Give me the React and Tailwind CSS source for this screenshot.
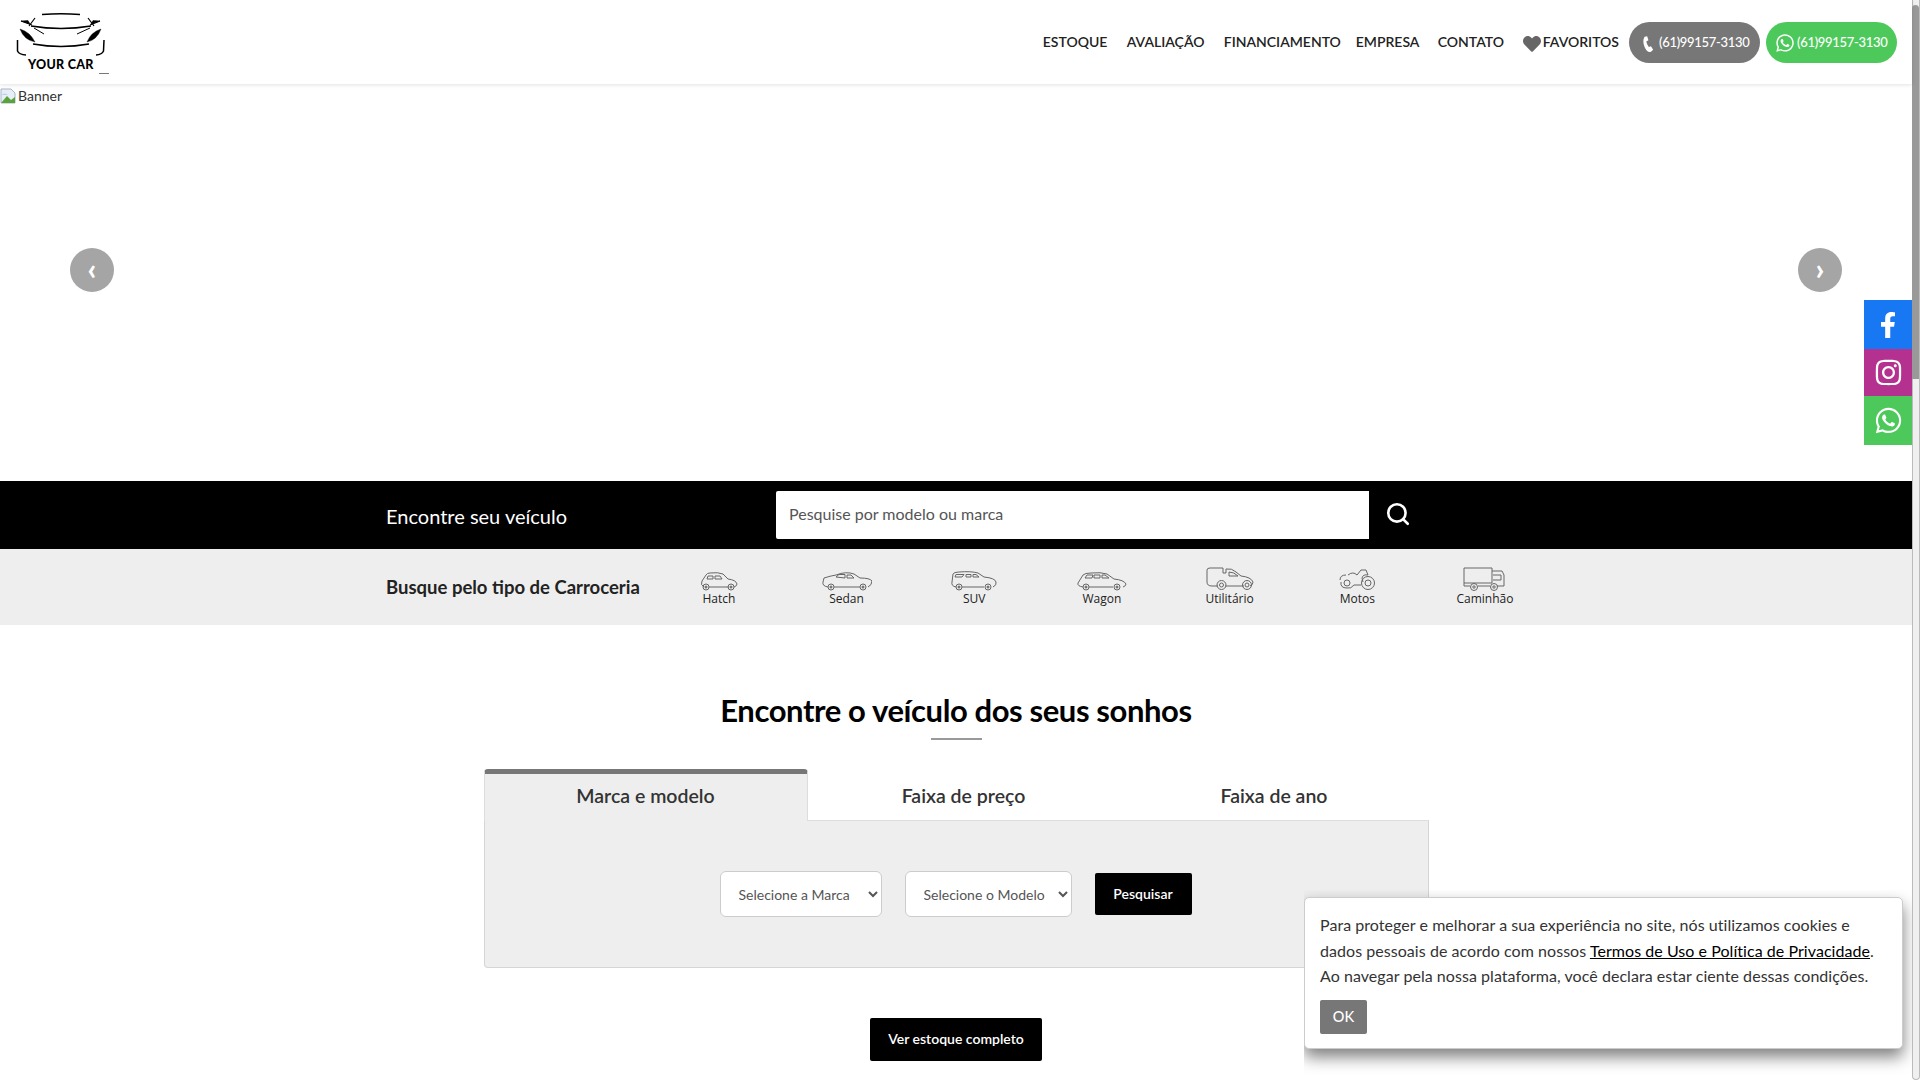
import { useState } from "react";
import { FaFacebookF, FaInstagram, FaWhatsapp, FaHeart } from "react-icons/fa";
import { Search } from "lucide-react";

const font = "font-['Lato','Noto_Sans',sans-serif]";

const navLinks = [
  { name: "ESTOQUE", w: "w-[64px]" },
  { name: "AVALIAÇÃO", w: "w-[77px]" },
  { name: "FINANCIAMENTO", w: "w-[112px]" },
  { name: "EMPRESA", w: "w-[62px]" },
  { name: "CONTATO", w: "w-[64px]" },
];

function Logo() {
  return (
    <div className="ml-[15px] flex w-[95px] flex-col items-center">
      <svg width="95" height="46" viewBox="15 10 95 46" fill="none" stroke="#000">
        <path d="M42 12.5 Q61 11 80 12.5" strokeWidth="1.4" />
        <path d="M21 19 L32 23 M35 16 L29 24 M88 16 L94 24 M100 19 L90 23" strokeWidth="1.2" />
        <path d="M21 19 L28 18.5 L30 22 Z M100 19 L93 18.5 L91 22 Z" fill="#000" strokeWidth="0.5" />
        <path d="M31 24 Q61 29 91 24" strokeWidth="1.5" />
        <path d="M34 26 L44 32 M90 26 L77 32" strokeWidth="1" />
        <path d="M20 27 Q30 30 35 40 Q24 38 20 27 Z M101 27 Q91 30 87 40 Q97 38 101 27 Z" fill="#000" strokeWidth="0.4" />
        <path d="M33 42 Q61 47 89 42" strokeWidth="1.3" />
        <path d="M17.5 38 L17.5 49 Q19 52.5 26 53 M104 38 L103.5 49 Q102 52.5 96 53" strokeWidth="1.5" />
      </svg>
      <div className="relative w-full pl-[13px] text-[12.5px] leading-[14px] font-black tracking-[0.3px] text-black">
        YOUR CAR
        <span className="absolute right-[1px] bottom-[-2px] h-[1.5px] w-[10px] bg-[#777]" />
      </div>
    </div>
  );
}

function PhoneGlyph() {
  return (
    <svg width="12" height="19" viewBox="0 0 14 20" fill="#fff" className="mt-[3px] shrink-0">
      <path d="M3 1 L6 0.5 L7.5 5 L5 6.5 Q5.5 10 8 13 L10.5 12 L13 16 L10.5 18.5 Q6 20 3 13 Q0 6 3 1 Z" />
    </svg>
  );
}

function Header() {
  return (
    <header className="relative z-10 flex h-[84px] items-center justify-between bg-white shadow-[0_1px_4px_rgba(0,0,0,0.12)]">
      <Logo />
      <nav className="mr-[15px] flex items-center text-[14px] font-semibold text-[#222]">
        {navLinks.map((link) => (
          <a key={link.name} className={`mr-[20px] whitespace-nowrap pb-[2px] ${link.w}`}>
            {link.name}
          </a>
        ))}
        <a className="mr-[10px] flex items-center whitespace-nowrap pb-[2px]">
          <FaHeart className="mt-[5px] mr-[2px] ml-[1px] text-[#666]" size={18} />
          FAVORITOS
        </a>
        <a className="flex h-[41px] w-[131px] items-center gap-[5px] rounded-[21px] bg-[#777] pt-[2px] pl-[13px] text-[13px] font-medium tracking-[-0.3px] text-white">
          <PhoneGlyph />
          (61)99157-3130
        </a>
        <a className="ml-[6px] flex h-[41px] w-[131px] items-center gap-[2px] rounded-[21px] bg-[#4dc95b] pt-[2px] pl-[9px] text-[13px] font-medium tracking-[-0.3px] text-white">
          <FaWhatsapp size={20} />
          (61)99157-3130
        </a>
      </nav>
    </header>
  );
}

function Banner() {
  return (
    <section className="relative h-[397px] bg-white">
      <div className="flex items-center pt-[2px] text-[14px] leading-[20px] text-[#333]">
        <svg width="16" height="16" viewBox="0 0 16 16" className="mr-[2px] shrink-0">
          <path d="M1 1 H11 L15 5 V15 H1 Z" fill="#e8eef8" stroke="#a9b4c4" />
          <path d="M1 15 L7 8 L11 12 L15 9 V15 Z" fill="#5aa33c" />
          <path d="M1 7 Q5 4 8 7" fill="#bcd0ef" />
        </svg>
        Banner
      </div>
      <button className="absolute top-[164px] left-[70px] flex h-[44px] w-[44px] items-center justify-center rounded-full bg-[#a5a5a5] pb-[4px] text-[30px] font-black text-white">
        ‹
      </button>
      <button className="absolute top-[164px] left-[1798px] flex h-[44px] w-[44px] items-center justify-center rounded-full bg-[#a5a5a5] pb-[4px] text-[30px] font-black text-white">
        ›
      </button>
    </section>
  );
}

function SearchBar() {
  return (
    <section className="flex h-[68px] items-center bg-black pl-[386px]">
      <h2 className="mt-[2px] w-[390px] text-[20px] font-normal text-white">Encontre seu veículo</h2>
      <input
        placeholder="Pesquise por modelo ou marca"
        className="mb-[1px] h-[48px] w-[593px] rounded-l-[2px] bg-white px-[13px] pb-[2px] text-[16px] text-[#444] placeholder:text-[#555] outline-none"
      />
      <Search className="mt-[-2px] ml-[16px] text-white" size={26} strokeWidth={2.4} />
    </section>
  );
}

const iconProps = { fill: "none", stroke: "#666", strokeWidth: 1 };

function Wheel({ cx, cy, r = 3 }) {
  return (
    <g>
      <circle cx={cx} cy={cy} r={r} fill="none" stroke="#666" strokeWidth="1" />
      <circle cx={cx} cy={cy} r={r - 1.5} fill="#777" stroke="none" />
    </g>
  );
}

function HatchIcon() {
  return (
    <svg width="38" height="20" viewBox="0 0 38 20" {...iconProps}>
      <path d="M4 16 Q0 14 2 10 L6 4 Q7 2 10 2 Q18 1 23 3 L28 8 Q36 9 37 13 Q37 15 34 16 M9 16 H29" />
      <path d="M8 5 L7 8 H13 L13 5 Z M15 5 V8 H22 L20 5 Z" />
      <Wheel cx="6" cy="16" />
      <Wheel cx="31" cy="16" />
    </svg>
  );
}

function SedanIcon() {
  return (
    <svg width="50" height="20" viewBox="0 0 50 20" {...iconProps}>
      <path d="M6 16 Q0 15 1 11 L2 7 Q8 5 14 4 Q24 0 32 3 L38 7 Q48 7 50 10 Q50 14 46 16 M12 16 H38" />
      <path d="M14 6 L17 3.5 H23 V7 Z M25 4 H29 L32 7 H25 Z" />
      <Wheel cx="9" cy="16" />
      <Wheel cx="41" cy="16" />
    </svg>
  );
}

function SuvIcon() {
  return (
    <svg width="46" height="20" viewBox="0 0 46 20" {...iconProps}>
      <path d="M5 16 Q0 15 1 11 L2 3 Q3 1 8 1 Q20 0 27 2 L33 6 Q44 7 45 11 Q46 14 42 16 M11 16 H33" />
      <path d="M5 3.5 L4 6 H11 L13 3.5 Z M15 3.5 V6 H20 V3.5 Z M22 3.5 V6 H28 L25 3.5 Z" />
      <Wheel cx="8" cy="16" />
      <Wheel cx="37" cy="16" />
    </svg>
  );
}

function WagonIcon() {
  return (
    <svg width="50" height="20" viewBox="0 0 50 20" {...iconProps}>
      <path d="M6 16 Q0 15 1 12 L6 4 Q8 2 14 2 Q24 1 30 3 L37 8 Q47 9 49 13 Q49 15 46 16 M12 16 H36" />
      <path d="M8 7 L10 4 H16 L15 7 Z M17 4 H23 V7 H17 Z M25 4 H28 L32 7 H25 Z" />
      <Wheel cx="9" cy="16" />
      <Wheel cx="40" cy="16" />
    </svg>
  );
}

function UtilitarioIcon() {
  return (
    <svg width="48" height="24" viewBox="0 0 48 24" {...iconProps}>
      <path d="M12 19 H6 Q1 19 1 15 V3 Q1 1 4 1 H17 V6 H20 V2 Q26 1 30 5 L35 9 Q45 10 47 15 Q47 18 44 19 M19 19 H38" />
      <path d="M23 9 V5 Q28 5 32 9 Z" />
      <circle cx="15.5" cy="18" r="4.5" />
      <circle cx="15.5" cy="18" r="2" />
      <circle cx="41" cy="18" r="4.5" />
      <circle cx="41" cy="18" r="2" />
    </svg>
  );
}

function MotoIcon() {
  return (
    <svg width="36" height="24" viewBox="0 0 36 24" {...iconProps}>
      <path d="M9 8 Q14 4 18 8 L22 3 H27 L29 8 Q24 7 23 11 L24 15 M1 13 Q1 8 7 8 M2 15 Q1 21 8 21 Q12 22 15 18 H22" />
      <circle cx="29" cy="16" r="6.5" />
      <circle cx="29" cy="16" r="3" />
      <circle cx="8" cy="16" r="3" />
    </svg>
  );
}

function TruckIcon() {
  return (
    <svg width="44" height="24" viewBox="0 0 44 24" {...iconProps}>
      <path d="M1 1 H29 V16 H1 Z M29 4 H39 L41 8 V19 H34 M30 8 H38 V13 H30 M1 16 V19 H7 M15 19 H27" />
      <circle cx="11" cy="20" r="3.5" />
      <circle cx="11" cy="20" r="1.2" />
      <circle cx="31" cy="20" r="3.5" />
      <circle cx="31" cy="20" r="1.2" />
    </svg>
  );
}

const bodyTypes = [
  { name: "Hatch", icon: HatchIcon },
  { name: "Sedan", icon: SedanIcon },
  { name: "SUV", icon: SuvIcon },
  { name: "Wagon", icon: WagonIcon },
  { name: "Utilitário", icon: UtilitarioIcon },
  { name: "Motos", icon: MotoIcon },
  { name: "Caminhão", icon: TruckIcon },
];

function BodyTypes() {
  return (
    <section className="flex h-[76px] items-center bg-[#eeeeee] pl-[386px]">
      <h3 className="mt-[1px] w-[269px] text-[18.5px] font-bold text-[#222]">Busque pelo tipo de Carroceria</h3>
      <div className="mb-[7px] flex">
        {bodyTypes.map((type) => {
          const Icon = type.icon;
          return (
            <a key={type.name} className="flex h-[44px] w-[127.7px] flex-col items-center justify-end">
              <Icon />
              <span className="font-['Open_Sans',sans-serif] text-[12px] leading-[15px] text-[#222]">{type.name}</span>
            </a>
          );
        })}
      </div>
    </section>
  );
}

function Finder() {
  const [tab] = useState("Marca e modelo");
  return (
    <section className="flex flex-col items-center pt-[67px]">
      <h2 className="text-[31px] leading-[36px] font-bold tracking-[-0.4px] text-black">Encontre o veículo dos seus sonhos</h2>
      <div className="mt-[10px] h-[2px] w-[51px] bg-[#999]" />
      <div className="mt-[29px] w-[945px]">
        <div className="flex h-[52px] text-[19.5px] font-semibold text-[#333]">
          {[
            { name: "Marca e modelo", w: "w-[324px]" },
            { name: "Faixa de preço", w: "w-[312px]" },
            { name: "Faixa de ano", w: "w-[309px]" },
          ].map((t) =>
            t.name === tab ? (
              <button key={t.name} className={`rounded-t-[4px] border-t-[5px] border-r border-l border-[#777] border-r-[#ddd] border-l-[#ddd] bg-[#eeeeee] pb-[4px] ${t.w}`}>
                {t.name}
              </button>
            ) : (
              <button key={t.name} className={`border-b border-[#ddd] pt-[2px] ${t.w}`}>
                {t.name}
              </button>
            ),
          )}
        </div>
        <div className="flex h-[147px] items-center rounded-b-[4px] border border-t-0 border-[#d5d5d5] bg-[#eeeeee] pl-[235px]">
          <select className="h-[46px] w-[162px] rounded-[6px] border border-[#ccc] bg-white pl-[14px] text-[14px] text-[#555]">
            <option>Selecione a Marca</option>
          </select>
          <select className="ml-[23px] h-[46px] w-[167px] rounded-[6px] border border-[#ccc] bg-white pl-[14px] text-[14px] text-[#555]">
            <option>Selecione o Modelo</option>
          </select>
          <button className="ml-[23px] h-[42px] w-[97px] rounded-[2px] bg-black pb-[1px] text-[14px] font-semibold text-white">Pesquisar</button>
        </div>
      </div>
      <button className="mt-[50px] h-[43px] w-[172px] rounded-[2px] bg-black pb-[2px] text-[14px] font-semibold text-white">Ver estoque completo</button>
    </section>
  );
}

function SocialBar() {
  return (
    <div className="absolute top-[300px] right-0 flex w-[48px] flex-col text-white">
      <a className="flex h-[49px] items-center justify-center bg-[#1877f2]">
        <FaFacebookF size={26} />
      </a>
      <a className="flex h-[47px] items-center justify-center bg-[#b5318f]">
        <FaInstagram size={29} />
      </a>
      <a className="flex h-[49px] items-center justify-center bg-[#4dc95b]">
        <FaWhatsapp size={29} />
      </a>
    </div>
  );
}

function CookieNotice() {
  return (
    <div className="absolute top-[890px] right-0 h-[190px] w-[608px] overflow-hidden">
      <div className="mt-[7px] mr-[9px] flex h-[152px] flex-col items-start rounded-[5px] border border-[#ccc] bg-white pt-[14px] pl-[15px] text-[16px] leading-[25.5px] tracking-[0.05px] text-[#333] shadow-[0_8px_16px_rgba(0,0,0,0.5)]">
        <p className="whitespace-nowrap">
          Para proteger e melhorar a sua experiência no site, nós utilizamos cookies e
          <br />
          dados pessoais de acordo com nossos <a className="text-black underline">Termos de Uso e Política de Privacidade</a>.
          <br />
          Ao navegar pela nossa plataforma, você declara estar ciente dessas condições.
        </p>
        <button className="mt-[11px] h-[34px] w-[47px] rounded-[2px] bg-[#777] text-[14.5px] font-medium text-white">OK</button>
      </div>
    </div>
  );
}

function FakeScrollbar() {
  return (
    <div className="h-full w-[8px] shrink-0 rounded-b-[4px] border-x border-b border-[#bbb] bg-[#f0f0f0]">
      <div className="mt-[5px] -ml-px h-[374px] w-[7px] rounded-t-[4px] bg-[#999]" />
    </div>
  );
}

export default function App() {
  return (
    <div className={`flex h-screen overflow-hidden bg-white ${font}`}>
      <main className="relative min-w-0 flex-1">
        <Header />
        <Banner />
        <SearchBar />
        <BodyTypes />
        <Finder />
        <SocialBar />
        <CookieNotice />
      </main>
      <FakeScrollbar />
    </div>
  );
}
